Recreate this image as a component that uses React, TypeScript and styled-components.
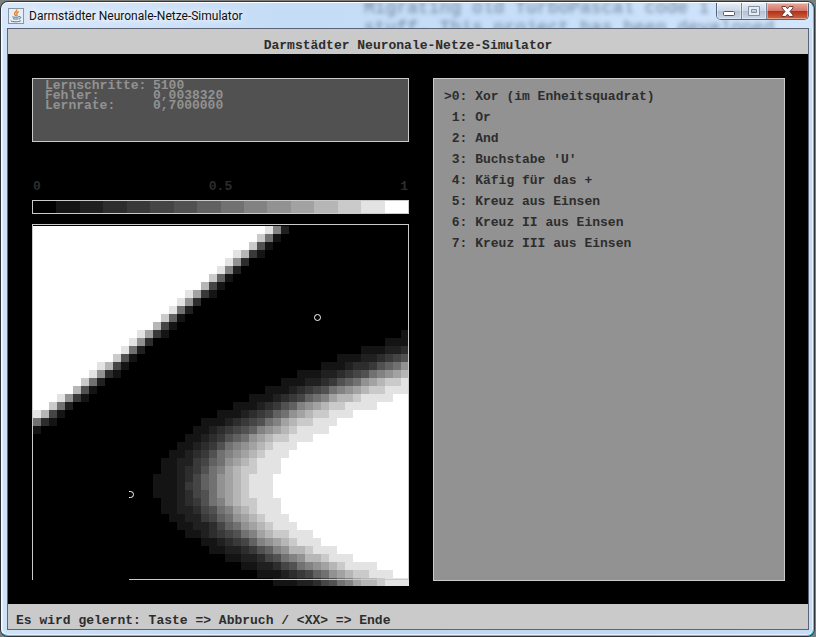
import React, { useState } from "react";
import styled, { createGlobalStyle } from "styled-components";

const GlobalStyle = createGlobalStyle`
  * { box-sizing: border-box; }
  html, body, #root { height: 100%; }
  body { margin: 0; background: #7b7f80; }
`;

const mono = `"Liberation Mono", "Courier New", monospace`;

/* The sixteen grey levels of the simulator's palette. */
const GREYS = [
  "#000000", "#141414", "#202020", "#2d2d2d", "#393939", "#454545", "#515151", "#616161",
  "#717171", "#828282", "#929292", "#a2a2a2", "#b6b6b6", "#cacaca", "#e3e3e3", "#ffffff",
];

const Desktop = styled.div`
  min-height: 100%;
  display: flex;
  padding: 2px 2px 1px 1px;
`;

const WindowFrame = styled.main`
  flex: 1;
  min-width: 0;
  display: flex;
  flex-direction: column;
  padding: 0 4px 5px 5px;
  background: linear-gradient(90deg, #cfe2f8, #bcd5f0 40%, #c6dcf8);
  border: 1px solid #3ecdf0;
  border-top-color: #ffffff;
  border-left-color: #f4faff;
  border-radius: 7px;
  box-shadow: 0 0 0 1px #303638, inset 0 0 0 1px #e6f2ff;
  overflow: hidden;
`;

const TitleBar = styled.header`
  position: relative;
  height: 25px;
  flex: none;
  display: flex;
  align-items: center;
  gap: 5px;
  margin: 0 -4px 0 -5px;
  padding-left: 6px;
  background: linear-gradient(90deg, #d8e8fa, #c5dcf6 35%, #c6def9 65%, #d3e6fc);
  overflow: hidden;
`;

const GlassText = styled.div`
  position: absolute;
  left: 362px;
  top: -5px;
  color: #71879f;
  font: 18px/20px ${mono};
  white-space: pre;
  filter: blur(2px);
`;

const WindowTitle = styled.h1`
  position: relative;
  margin: 0;
  color: #101010;
  font: 12px/20px Roboto, "Open Sans", sans-serif;
  white-space: nowrap;
  text-shadow: 0 0 8px #ffffff, 0 0 6px #ffffff;
`;

const IconBox = styled.svg`
  position: relative;
  flex: none;
  display: block;
`;

const WindowButtons = styled.div`
  position: relative;
  align-self: flex-start;
  display: flex;
  margin-left: auto;
  margin-right: 4px;
  border: 1px solid #56657a;
  border-top: 0;
  border-radius: 0 0 5px 5px;
  overflow: hidden;
`;

const WindowButton = styled.button<{ $kind: "plain" | "close" }>`
  width: ${(p) => (p.$kind === "close" ? 41 : 25)}px;
  height: 16px;
  padding: 0;
  border: 0;
  border-right: ${(p) => (p.$kind === "close" ? "0" : "1px solid #7b8798")};
  display: flex;
  align-items: center;
  justify-content: center;
  box-shadow: inset 0 0 0 1px rgba(255, 255, 255, 0.4);
  background: ${(p) =>
    p.$kind === "close"
      ? "linear-gradient(#e9aa9e, #d4766a 48%, #b52f18 52%, #ce6640)"
      : "linear-gradient(#e4edf8, #cbd7e6 48%, #b4c2d3 52%, #c9d7e8)"};
`;

const Client = styled.section`
  flex: 1;
  display: flex;
  flex-direction: column;
  border: 1px solid #5c6475;
  background: #000000;
`;

const Band = styled.div<{ $centered?: boolean }>`
  flex: none;
  height: 25px;
  padding: 9px 8px 0;
  background: #cacaca;
  color: #2d2d2d;
  font: bold 13px/16px ${mono};
  text-align: ${(p) => (p.$centered ? "center" : "left")};
  white-space: pre;
`;

const Workspace = styled.div`
  flex: 1;
  display: grid;
  grid-template-columns: 377fr 352fr;
  gap: 24px;
  padding: 24px 23px 17px 24px;
`;

const LeftColumn = styled.div`
  min-width: 0;
  display: flex;
  flex-direction: column;
`;

const InfoPanel = styled.dl`
  height: 64px;
  margin: 0;
  padding: 2px 12px;
  display: grid;
  grid-template-columns: 108px 1fr;
  grid-auto-rows: 10px;
  border: 1px solid #cacaca;
  background: #515151;
  color: #929292;
  font: bold 13px/10px ${mono};
`;

const Term = styled.dt`
  margin: 0;
`;

const Value = styled.dd`
  margin: 0;
`;

const ScaleLabels = styled.div`
  display: grid;
  grid-template-columns: 1fr auto 1fr;
  margin-top: 35px;
  padding: 0 1px;
  color: #2d2d2d;
  font: bold 13px/20px ${mono};

  span:last-child { text-align: right; }
`;

const ScaleBar = styled.div`
  height: 14px;
  margin-top: 3px;
  display: flex;
  border: 1px solid #cacaca;
`;

const Shade = styled.div<{ $level: number }>`
  flex: 1;
  background: ${(p) => GREYS[p.$level]};
`;

const MapDrawing = styled.svg`
  display: block;
  width: 100%;
  height: auto;
  margin-top: 10px;
`;

const PatternPanel = styled.ul`
  margin: 0 0 6px;
  padding: 7px 10px;
  list-style: none;
  border: 1px solid #cacaca;
  background: #929292;
`;

const PatternButton = styled.button`
  display: block;
  width: 100%;
  height: 21px;
  padding: 0;
  border: 0;
  background: transparent;
  color: #2d2d2d;
  font: bold 13px/21px ${mono};
  text-align: left;
  white-space: pre;
`;

/* Network output per cell: first the column where a run starts, then one hex grey level per cell.
   Everything to the left of a ridge run is at the highest level. */
const RIDGE: [number, string][] = [
  [29, "e92"], [28, "d81"], [27, "d61"], [25, "ec41"], [24, "ea3"], [23, "e92"],
  [22, "d71"], [21, "c51"], [19, "eb41"], [18, "ea3"], [17, "e82"], [16, "d71"],
  [15, "c51"], [13, "eb41"], [12, "ea3"], [11, "e82"], [10, "d61"], [8, "ec51"],
  [7, "ea31"], [6, "d82"], [5, "c61"], [3, "ea41"], [2, "d82"], [0, "ec51"],
  [0, "831"], [0, "1"],
];

/* The lobe at the right; everything to the right of a run is at the highest level. */
const LOBE_TOP = 13;
const LOBE: [number, string][] = [
  [46, "1"],
  [44, "111"],
  [41, "111223"],
  [38, "111223456"],
  [36, "1112334678a"],
  [33, "11122345689abc"],
  [31, "1112234678abcdde"],
  [29, "1112345689abcddeee"],
  [27, "1112345789bccdeeee"],
  [25, "111234679abcddeeee"],
  [23, "111234578abcddeee"],
  [21, "1112345689bcddeee"],
  [20, "112345679abcdeeee"],
  [19, "11234678abcddeee"],
  [18, "11234689abcdeee"],
  [17, "11234689abcdeee"],
  [16, "11224578abcdeee"],
  [16, "11234689bcddeee"],
  [15, "11123578abcdeee"],
  [15, "11124578abcdeee"],
  [15, "11123568abcdeee"],
  [16, "11234689bcddeee"],
  [16, "112235689bcdeee"],
  [17, "11224578abcdeee"],
  [18, "11223578abcdeee"],
  [19, "112345689bcddeee"],
  [21, "11234579abcdeee"],
  [22, "112234679accdeee"],
  [24, "112235689accdeee"],
  [26, "112235689abcdeeee"],
  [28, "111234578abcddeee"],
  [30, "1112235689bccdeee"],
];

const COLUMNS = 47;

function cells() {
  const out: { x: number; y: number; width: number; level: number }[] = [];
  RIDGE.forEach(([start, run], row) => {
    if (start) out.push({ x: 0, y: row, width: start, level: 15 });
    [...run].forEach((c, i) => out.push({ x: start + i, y: row, width: 1, level: parseInt(c, 16) }));
  });
  LOBE.forEach(([start, run], i) => {
    const row = LOBE_TOP + i;
    [...run].forEach((c, k) => out.push({ x: start + k, y: row, width: 1, level: parseInt(c, 16) }));
    const end = start + run.length;
    if (end < COLUMNS) out.push({ x: end, y: row, width: COLUMNS - end, level: 15 });
  });
  return out;
}

const OutputMap = () => (
  <MapDrawing viewBox="0 0 377 362" role="img" aria-label="Netzausgabe im Einheitsquadrat">
    <g shapeRendering="crispEdges">
      {cells().map((c) => (
        <rect
          key={`${c.x}-${c.y}`}
          x={1 + c.x * 8}
          y={2 + c.y * 8}
          width={c.width * 8}
          height={8}
          fill={GREYS[c.level]}
        />
      ))}
      <path d="M0.5 356V0.5H376.5V355.5H97" fill="none" stroke="#cacaca" />
    </g>
    <circle cx="285.5" cy="93.5" r="3" fill="none" stroke="#ffffff" />
    <path d="M97 267.5H98.5A3 3 0 0 1 98.5 273.5H97" fill="none" stroke="#ffffff" />
  </MapDrawing>
);

const JavaIcon = () => (
  <IconBox width="16" height="16" viewBox="0 0 16 16" aria-hidden="true">
    <rect x="0.5" y="0.5" width="15" height="15" fill="#e9eef2" stroke="#8696a4" />
    <path d="M8.6 1.5C9.6 3.4 5.6 4.4 6.6 6.1C6.9 6.8 7.6 7.2 7.7 8M10.8 3.6C8.8 4.6 8.4 5.4 9 6.3C9.5 7 9 7.6 8.6 8" fill="none" stroke="#e8781e" strokeWidth="1.3" />
    <path d="M4.4 8.8C5.6 9.4 9.4 9.4 11 8.8M5 10.7C6.6 11.2 9.2 11.2 10.4 10.7M11 8.7C13.6 8.2 13.2 10.6 10.9 11.1M3 12.6C2 13.9 10.4 14.4 12.8 12.7" fill="none" stroke="#4c7595" />
  </IconBox>
);

const PATTERNS = [
  "Xor (im Enheitsquadrat)",
  "Or",
  "And",
  "Buchstabe 'U'",
  "Käfig für das +",
  "Kreuz aus Einsen",
  "Kreuz II aus Einsen",
  "Kreuz III aus Einsen",
];

const READINGS: [string, string][] = [
  ["Lernschritte:", "5100"],
  ["Fehler:", "0,0038320"],
  ["Lernrate:", "0,7000000"],
];

export default function App() {
  const [selected, setSelected] = useState(0);
  return (
    <Desktop>
      <GlobalStyle />
      <WindowFrame>
        <TitleBar>
          <GlassText aria-hidden="true">
            {"Migrating old TurboPascal code i\nstuff. This project has been developed"}
          </GlassText>
          <JavaIcon />
          <WindowTitle>Darmstädter Neuronale-Netze-Simulator</WindowTitle>
          <WindowButtons>
            <WindowButton $kind="plain" aria-label="Minimieren">
              <svg width="14" height="12" viewBox="0 0 14 12">
                <rect x="1.5" y="6.5" width="11" height="4" rx="1" fill="#ffffff" stroke="#4f5868" />
              </svg>
            </WindowButton>
            <WindowButton $kind="plain" aria-label="Maximieren">
              <svg width="12" height="10" viewBox="0 0 12 10">
                <path d="M0.5 0.5H11.5V9.5H0.5ZM3.5 3.5V6.5H8.5V3.5Z" fill="#e6ecf3" fillRule="evenodd" stroke="#8390a2" />
              </svg>
            </WindowButton>
            <WindowButton $kind="close" aria-label="Schließen">
              <svg width="13" height="11" viewBox="0 0 13 11">
                <path d="M1 0.5H4.6L6.5 2.8L8.4 0.5H12V2L9 5.5L12 9V10.5H8.4L6.5 8.2L4.6 10.5H1V9L4 5.5L1 2Z" fill="#ffffff" stroke="#6b3a3a" />
              </svg>
            </WindowButton>
          </WindowButtons>
        </TitleBar>
        <Client>
          <Band $centered>Darmstädter Neuronale-Netze-Simulator</Band>
          <Workspace>
            <LeftColumn>
              <InfoPanel>
                {READINGS.map(([name, value]) => (
                  <React.Fragment key={name}>
                    <Term>{name}</Term>
                    <Value>{value}</Value>
                  </React.Fragment>
                ))}
              </InfoPanel>
              <ScaleLabels>
                <span>0</span>
                <span>0.5</span>
                <span>1</span>
              </ScaleLabels>
              <ScaleBar>
                {GREYS.map((grey, level) => (
                  <Shade key={grey} $level={level} />
                ))}
              </ScaleBar>
              <OutputMap />
            </LeftColumn>
            <PatternPanel>
              {PATTERNS.map((name, i) => (
                <li key={name}>
                  <PatternButton aria-pressed={i === selected} onClick={() => setSelected(i)}>
                    {`${i === selected ? ">" : " "}${i}: ${name}`}
                  </PatternButton>
                </li>
              ))}
            </PatternPanel>
          </Workspace>
          <Band>{"Es wird gelernt: Taste => Abbruch / <XX> => Ende"}</Band>
        </Client>
      </WindowFrame>
    </Desktop>
  );
}
